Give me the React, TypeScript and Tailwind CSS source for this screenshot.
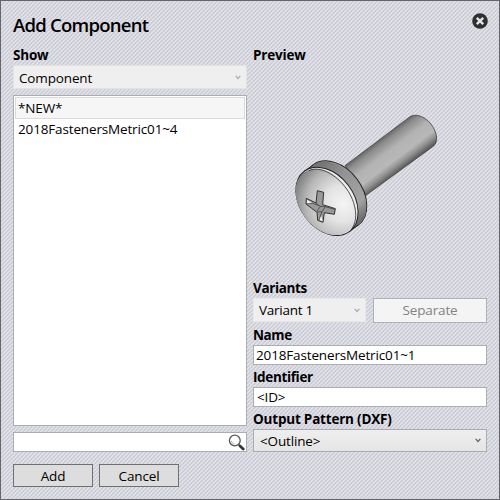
import React from "react";

const hatch =
  "bg-[linear-gradient(135deg,#cdcdd8_0%,#cdcdd8_12.5%,#e1e1e8_25%,#e1e1e8_37.5%,#cdcdd8_50%,#cdcdd8_62.5%,#e1e1e8_75%,#e1e1e8_87.5%,#cdcdd8_100%)] bg-[length:4px_4px]";

function Label({ children, className = "" }: { children: React.ReactNode; className?: string }) {
  return <div className={`h-[18px] whitespace-nowrap text-[13.5px] leading-[18px] font-bold ${className}`}>{children}</div>;
}

function Chevron({ color }: { color: string }) {
  return (
    <svg width="6" height="5" viewBox="0 0 6 5" fill="none" stroke={color} strokeWidth="1.3">
      <path d="M.7.8 3 3.6 5.3.8" />
    </svg>
  );
}

function Screw() {
  return (
    <svg width="160" height="140" viewBox="0 0 480 420">
      <defs>
        <linearGradient id="shank" gradientUnits="userSpaceOnUse" x1="275" y1="107" x2="343" y2="197">
          <stop offset="0" stopColor="#606060" />
          <stop offset=".15" stopColor="#8c8c8c" />
          <stop offset=".42" stopColor="#b3b3b3" />
          <stop offset=".7" stopColor="#b8b8b8" />
          <stop offset=".85" stopColor="#929292" />
          <stop offset="1" stopColor="#5c5c5c" />
        </linearGradient>
        <linearGradient id="rim" gradientUnits="userSpaceOnUse" x1="70" y1="180" x2="220" y2="370">
          <stop offset="0" stopColor="#6c6c6c" />
          <stop offset=".35" stopColor="#939393" />
          <stop offset=".75" stopColor="#a4a4a4" />
          <stop offset="1" stopColor="#5a5a5a" />
        </linearGradient>
        <radialGradient id="dome" gradientUnits="userSpaceOnUse" cx="158" cy="252" r="158">
          <stop offset="0" stopColor="#f4f4f4" />
          <stop offset=".35" stopColor="#e3e3e3" />
          <stop offset=".7" stopColor="#b8b8b8" />
          <stop offset="1" stopColor="#777" />
        </radialGradient>
      </defs>
      <path d="M180 182 375 35Q384 29 397 31C430 37 454 72 455 100Q455 116 446 123L243 271Z" fill="url(#shank)" stroke="#3a3a3a" strokeWidth="2.2" />
      <ellipse cx="152" cy="270" rx="113" ry="80" transform="rotate(53 152 270)" fill="#969696" stroke="#222" strokeWidth="3" />
      <path d="M58 199 84 180C120 153 175 180 214 228C253 276 253 337 220 360L194 379Z" fill="url(#rim)" />
      <path d="M58 199 84 180M194 379 220 360" stroke="#222" strokeWidth="3" />
      <ellipse cx="126" cy="289" rx="113" ry="80" transform="rotate(53 126 289)" fill="#ececec" stroke="#222" strokeWidth="3" />
      <ellipse cx="122" cy="291" rx="110" ry="77" transform="rotate(53 122 291)" fill="url(#dome)" />
      <path d="M72 197C103 181 154 208 185 252C214 293 221 344 200 371" fill="none" stroke="#333" strokeWidth="2.5" />
      <path d="M97 257 116 262 113 299 151 311 148 328 118 323 114 352 98 346 96 322 63 297 64 280 93 294Z" fill="#999" stroke="#333" strokeWidth="3" strokeLinejoin="round" />
      <path d="M66 284 83 295 66 296ZM108 330 113 349 102 344Z" fill="#f5f5f5" />
      <path d="M64 297 83 295 102 302 93 294M96 318 107 304 102 302M107 304 121 305 148 313M121 305 111 320 96 321M111 320 102 345" fill="none" stroke="#444" strokeWidth="2.5" />
    </svg>
  );
}

export default function App() {
  return (
    <div className={`flex h-[500px] w-[500px] flex-col overflow-hidden border border-[#65656c] pl-3 font-['Open_Sans','Noto_Sans',sans-serif] text-[13.5px] tracking-[-0.15px] text-black ${hatch}`}>
      <header className="flex h-[45px] w-[474px] shrink-0 justify-between">
        <h1 className="mt-[10px] text-[18.5px] leading-[28px] font-semibold tracking-[-0.75px] whitespace-nowrap">Add Component</h1>
        <svg className="mt-3 -mr-px" width="16" height="16" viewBox="0 0 16 16">
          <circle cx="8" cy="8" r="7.8" fill="#303030" />
          <path d="m4.8 4.8 6.4 6.4m0-6.4-6.4 6.4" stroke="#e5e5e9" strokeWidth="2.4" />
        </svg>
      </header>
      <main className="flex h-[406px] shrink-0 gap-[6px]">
        <section className="flex w-[234px] flex-col">
          <Label className="tracking-[-0.2px]">Show</Label>
          <div className="mt-px flex h-[24px] items-center justify-between border border-[#e2e2e2] bg-[#efefef] pr-[5px] pl-[5px]">
            <span className="relative top-px">Component</span>
            <Chevron color="#aaa" />
          </div>
          <div className="mt-[6px] h-[331px] border border-[#abadb3] bg-white p-px">
            <div className="flex h-[22px] items-center border border-[#dadada] bg-[#f6f6f6] pl-[2px]">*NEW*</div>
            <div className="flex h-[20px] items-center pl-[3px]">2018FastenersMetric01~4</div>
          </div>
          <div className="mt-[6px] flex h-[20px] items-center justify-end border border-[#abadb3] bg-white pr-[1px]">
            <svg width="17" height="17" viewBox="0 0 17 17" fill="none">
              <circle cx="6.8" cy="6.5" r="5.4" stroke="#555" strokeWidth="1.3" />
              <path d="M3.5 6.8c.1 2 1.3 3 3 3.2" stroke="#aaa" />
              <path d="m10.7 10.6 1.6 1.5" stroke="#555" strokeWidth="1.5" />
              <path d="m12 12 3.2 3" stroke="#333" strokeWidth="2.8" strokeLinecap="round" />
            </svg>
          </div>
        </section>
        <section className="flex w-[234px] flex-col">
          <Label className="tracking-[-0.2px]">Preview</Label>
          <div className="mt-[41px] mb-[34px] ml-8 h-[140px] shrink-0"><Screw /></div>
          <Label className="tracking-[-0.35px]">Variants</Label>
          <div className="mt-px flex h-[25px] gap-[7px]">
            <div className="flex h-[24px] w-[113px] items-center justify-between border border-[#e8e8e8] bg-[#efefef] pr-[5px] pl-[5px]">
              <span className="tracking-[-0.25px]">Variant 1</span>
              <Chevron color="#aaa" />
            </div>
            <div className="flex h-[25px] w-[114px] items-center justify-center border border-[#adb2b5] bg-[#f4f4f4] text-[#838383]">Separate</div>
          </div>
          <Label className="mt-[3px] tracking-[-0.4px]">Name</Label>
          <div className="mt-px flex h-[20px] items-center border border-[#abadb3] bg-white pl-[2px]">2018FastenersMetric01~1</div>
          <Label className="mt-[3px] tracking-[-0.35px]">Identifier</Label>
          <div className="mt-px flex h-[20px] items-center border border-[#abadb3] bg-white pl-[3px]">&lt;ID&gt;</div>
          <Label className="mt-[3px] tracking-[-0.2px]">Output Pattern (DXF)</Label>
          <div className="mt-px flex h-[24px] items-center justify-between border border-[#acacac] bg-linear-to-b from-[#efefef] to-[#e5e5e5] pr-[5px] pl-[6px]">
            <span className="relative top-px">&lt;Outline&gt;</span>
            <Chevron color="#606060" />
          </div>
        </section>
      </main>
      <footer className="mt-[12px] flex gap-[6px]">
        <button className="h-[23px] w-[80px] border border-[#707070] bg-[#dddddd] pt-px leading-[20px]">Add</button>
        <button className="h-[23px] w-[80px] border border-[#707070] bg-[#dddddd] pt-px leading-[20px]">Cancel</button>
      </footer>
    </div>
  );
}
